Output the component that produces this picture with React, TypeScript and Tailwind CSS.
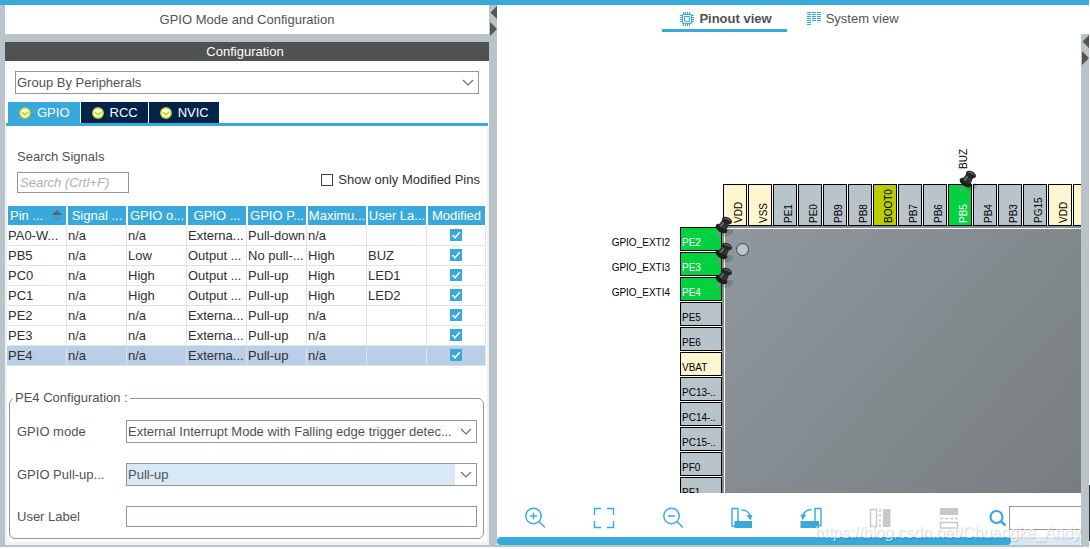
import { useState } from 'react'
import type { JSX, ReactNode } from 'react'

interface SignalRow {
  pin: string
  signal: string
  output: string
  mode: string
  pull: string
  speed: string
  label: string
}

interface Pin {
  name: string
  kind: 'io' | 'power' | 'boot' | 'used'
  signal?: string
}

const COLUMNS = ['Pin ...', 'Signal ...', 'GPIO o...', 'GPIO ...', 'GPIO P...', 'Maximu...', 'User La...', 'Modified']

const ROWS: SignalRow[] = [
  { pin: 'PA0-W...', signal: 'n/a', output: 'n/a', mode: 'Externa...', pull: 'Pull-down', speed: 'n/a', label: '' },
  { pin: 'PB5', signal: 'n/a', output: 'Low', mode: 'Output ...', pull: 'No pull-...', speed: 'High', label: 'BUZ' },
  { pin: 'PC0', signal: 'n/a', output: 'High', mode: 'Output ...', pull: 'Pull-up', speed: 'High', label: 'LED1' },
  { pin: 'PC1', signal: 'n/a', output: 'High', mode: 'Output ...', pull: 'Pull-up', speed: 'High', label: 'LED2' },
  { pin: 'PE2', signal: 'n/a', output: 'n/a', mode: 'Externa...', pull: 'Pull-up', speed: 'n/a', label: '' },
  { pin: 'PE3', signal: 'n/a', output: 'n/a', mode: 'Externa...', pull: 'Pull-up', speed: 'n/a', label: '' },
  { pin: 'PE4', signal: 'n/a', output: 'n/a', mode: 'Externa...', pull: 'Pull-up', speed: 'n/a', label: '' },
]

const TOP_PINS: Pin[] = [
  { name: 'VDD', kind: 'power' },
  { name: 'VSS', kind: 'power' },
  { name: 'PE1', kind: 'io' },
  { name: 'PE0', kind: 'io' },
  { name: 'PB9', kind: 'io' },
  { name: 'PB8', kind: 'io' },
  { name: 'BOOT0', kind: 'boot' },
  { name: 'PB7', kind: 'io' },
  { name: 'PB6', kind: 'io' },
  { name: 'PB5', kind: 'used', signal: 'BUZ' },
  { name: 'PB4', kind: 'io' },
  { name: 'PB3', kind: 'io' },
  { name: 'PG15', kind: 'io' },
  { name: 'VDD', kind: 'power' },
  { name: '', kind: 'power' },
]

const LEFT_PINS: Pin[] = [
  { name: 'PE2', kind: 'used', signal: 'GPIO_EXTI2' },
  { name: 'PE3', kind: 'used', signal: 'GPIO_EXTI3' },
  { name: 'PE4', kind: 'used', signal: 'GPIO_EXTI4' },
  { name: 'PE5', kind: 'io' },
  { name: 'PE6', kind: 'io' },
  { name: 'VBAT', kind: 'power' },
  { name: 'PC13-..', kind: 'io' },
  { name: 'PC14-..', kind: 'io' },
  { name: 'PC15-..', kind: 'io' },
  { name: 'PF0', kind: 'io' },
  { name: 'PF1', kind: 'io' },
]

const PIN_FILL = { io: '#b9c4ca', power: '#fff6cf', boot: '#bbcc01', used: '#03d13f' }

function Chevron(): JSX.Element {
  return (
    <svg width="12" height="8" viewBox="0 0 12 8" fill="none" stroke="#6b6f73" strokeWidth="1.200" aria-hidden="true">
      <path d="M1 1l5 5 5-5" />
    </svg>
  )
}

function Combo({ id, label, value, tinted = false }: { id: string; label?: string; value: string; tinted?: boolean }) {
  return (
    <div className="relative h-[23px] w-full">
      <select
        id={id}
        aria-label={label}
        className={`block h-full w-full appearance-none border border-[#8f979d] pl-px pr-6 text-[#525252] outline-none ${
          tinted ? 'bg-[#d9e8f5]' : 'bg-white'
        }`}
      >
        <option>{value}</option>
      </select>
      <span className="pointer-events-none absolute inset-y-px right-px flex w-[21px] items-center justify-center bg-white">
        <Chevron />
      </span>
    </div>
  )
}

function Arrows(): JSX.Element {
  return (
    <svg width="8" height="31" viewBox="0 0 8 31" fill="#555" aria-hidden="true">
      <path d="M8 1v13L1.500 7.500zM1 17v14l7-7z" />
    </svg>
  )
}

function TabButton({ name, active, onClick }: { name: string; active: boolean; onClick: () => void }) {
  return (
    <button
      role="tab"
      aria-selected={active}
      onClick={onClick}
      className={`flex h-[21px] items-center gap-[6px] pl-[11px] pr-2.5 text-white ${active ? 'bg-[#39a9dc]' : 'bg-[#03234b]'}`}
    >
      <svg width="12" height="12" viewBox="0 0 12 12" fill="none" aria-hidden="true">
        <circle cx="6" cy="6" r="5.300" fill="#fff" stroke="#bbcc01" strokeWidth="1.400" />
        <path d="M3 5l3 3 3.200-3.200" stroke="#bbcc01" strokeWidth="1.500" />
      </svg>
      {name}
    </button>
  )
}

function SignalTable(): JSX.Element {
  const cell = 'truncate border-b border-r border-[#e0e3e6] p-0 pl-px'
  return (
    <table className="w-full table-fixed border-separate border-spacing-0 text-[#303030]">
      <colgroup>
        {COLUMNS.map((column) => (
          <col key={column} className={column === 'Modified' ? '' : 'w-[60px]'} />
        ))}
      </colgroup>
      <thead>
        <tr className="h-5">
          {COLUMNS.map((column, i) => (
            <th
              key={column}
              className="overflow-hidden whitespace-nowrap border-x border-b border-white bg-[#39a9dc] p-0 font-normal leading-[19px] text-white"
            >
              {i === 0 ? (
                <span className="flex items-center justify-between pl-0.5 pr-1">
                  {column}
                  <svg width="10" height="12" viewBox="0 0 10 12" aria-hidden="true">
                    <path d="M5 0l5 5H0z" fill="#5c6468" />
                    <path d="M5 11L0.500 7h9z" fill="#4f93b5" />
                  </svg>
                </span>
              ) : (
                column
              )}
            </th>
          ))}
        </tr>
      </thead>
      <tbody>
        {ROWS.map((row) => (
          <tr key={row.pin} className={`h-5 leading-[19px] ${row.pin === 'PE4' ? 'bg-[#b9cfe7]' : 'bg-white'}`}>
            <td className={cell}>{row.pin}</td>
            <td className={cell}>{row.signal}</td>
            <td className={cell}>{row.output}</td>
            <td className={cell}>{row.mode}</td>
            <td className={cell}>{row.pull}</td>
            <td className={cell}>{row.speed}</td>
            <td className={cell}>{row.label}</td>
            <td className="border-b border-r border-[#e0e3e6] p-0">
              <span className="grid h-[19px] place-items-center pb-px">
                <input
                  type="checkbox"
                  defaultChecked
                  aria-label={`${row.pin} modified`}
                  className="col-start-1 row-start-1 size-3 appearance-none bg-[#39a9dc]"
                />
                <svg
                  width="12"
                  height="12"
                  viewBox="0 0 12 12"
                  fill="none"
                  stroke="#fff"
                  strokeWidth="1.600"
                  className="pointer-events-none col-start-1 row-start-1"
                  aria-hidden="true"
                >
                  <path d="M2.500 6l2.500 2.700L9.700 3.300" />
                </svg>
              </span>
            </td>
          </tr>
        ))}
      </tbody>
    </table>
  )
}

function ConfigPanel(): JSX.Element {
  const [tab, setTab] = useState('GPIO')

  return (
    <section className="flex w-[489px] shrink-0 flex-col bg-[#b9c4ca] pb-0.5 pl-[5px] text-[#525252]">
      <h1 className="h-[29px] bg-white text-center leading-[29px]">GPIO Mode and Configuration</h1>
      <h2 className="mt-2 h-[19px] bg-[#505251] pr-1 text-center leading-[19px] text-white">Configuration</h2>

      <div className="flex grow flex-col bg-white">
        <div className="px-2.5 pt-2.5">
          <Combo id="group" label="Grouping" value="Group By Peripherals" />
        </div>

        <div role="tablist" className="mx-px mt-2 flex gap-px border-b-[3px] border-[#39a9dc] pl-0.5">
          {['GPIO', 'RCC', 'NVIC'].map((name) => (
            <TabButton key={name} name={name} active={tab === name} onClick={() => setTab(name)} />
          ))}
        </div>

        <div className="grow border-x-2 border-b-[3px] border-[#eff1f3] pr-px">
          <div className="flex items-end justify-between pl-2.5 pr-[6px] pt-[22px]">
            <div className="flex flex-col gap-[6px]">
              <label htmlFor="search" className="leading-[18px]">
                Search Signals
              </label>
              <input
                id="search"
                placeholder="Search (Crtl+F)"
                className="h-[21px] w-[112px] border border-[#8f979d] px-0.5 italic outline-none placeholder:text-[#b0b0b0]"
              />
            </div>
            <label className="mb-1 flex items-center gap-[5px] leading-[18px] text-[#303030]">
              <input type="checkbox" className="size-3 appearance-none border border-[#444]" />
              Show only Modified Pins
            </label>
          </div>

          <div className="mt-[13px]">
            <SignalTable />
          </div>

          <fieldset className="ml-0.5 mr-0.5 mt-[23px] rounded-[6px] border border-[#8f979d] pb-[11px] pl-[7px] pr-[6px] pt-[13px]">
            <legend className="-ml-1 px-0.5 leading-[18px]">PE4 Configuration :</legend>
            <div className="grid grid-cols-[109px_1fr] items-center gap-y-5">
              <label htmlFor="mode">GPIO mode</label>
              <Combo id="mode" value="External Interrupt Mode with Falling edge trigger detec..." />
              <label htmlFor="pull">GPIO Pull-up...</label>
              <Combo id="pull" value="Pull-up" tinted />
              <label htmlFor="user-label">User Label</label>
              <input id="user-label" className="h-[21px] w-full border border-[#8f979d] px-0.5 outline-none" />
            </div>
          </fieldset>
        </div>
      </div>
    </section>
  )
}

// x, y is the tip of the needle
function PushPin({ x, y }: { x: number; y: number }): JSX.Element {
  return (
    <g transform={`translate(${x} ${y})`}>
      <path d="M6-3q4-5 9-5 4 2 1 5-5 3-8 3z" fill="#000" opacity="0.15" />
      <path d="M0.500 0.500L5-7" stroke="#8b8b8b" strokeWidth="1.800" />
      <ellipse cx="5.500" cy="-8.500" rx="6.500" ry="3.800" transform="rotate(32 5.500 -8.500)" fill="#1d1d1d" />
      <path d="M2-11l4.500-6.500 7 3.500-3 7z" fill="#333" />
      <ellipse cx="11" cy="-16.500" rx="5.300" ry="3.300" transform="rotate(24 11 -16.500)" fill="#262626" />
      <path d="M4.500-10.500L7.500-14.500" stroke="#8a8a8a" strokeWidth="1.200" />
      <path d="M8.500-18.500q4 0 6 2.500" stroke="#777" fill="none" />
    </g>
  )
}

function ChipDrawing(): JSX.Element {
  return (
    <svg className="block h-[459px] w-full grow overflow-hidden text-[10px]" role="img" aria-label="Chip pinout">
      <defs>
        <linearGradient id="package" gradientUnits="userSpaceOnUse" x1="228" y1="195" x2="560" y2="500">
          <stop offset="0" stopColor="#8f989e" />
          <stop offset="1" stopColor="#777d7f" />
        </linearGradient>
      </defs>

      <rect x="225" y="191" width="100%" height="100%" fill="#84908f" />
      <rect x="227" y="194" width="100%" height="100%" fill="#fff" />
      <rect x="228" y="195" width="100%" height="100%" fill="url(#package)" />
      <circle cx="245.500" cy="215.500" r="6" fill="#b9c4ca" stroke="#3f4446" />

      {TOP_PINS.map((pin, i) => (
        <g key={i}>
          <rect x={226.5 + i * 25} y="150.500" width="23" height="41" fill={PIN_FILL[pin.kind]} stroke="#000" />
          <text transform={`translate(${245 + i * 25} 189) rotate(-90)`} fill={pin.kind === 'used' ? '#fff' : '#000'}>
            {pin.name}
          </text>
          {pin.signal && (
            <text transform={`translate(${245 + i * 25} 135) rotate(-90)`}>{pin.signal}</text>
          )}
        </g>
      ))}

      {LEFT_PINS.map((pin, i) => (
        <g key={pin.name}>
          <rect x="183.500" y={193.5 + i * 25} width="41" height="23" fill={PIN_FILL[pin.kind]} stroke="#000" />
          <text x="185" y={212 + i * 25} fill={pin.kind === 'used' ? '#fff' : '#000'}>
            {pin.name}
          </text>
          {pin.signal && (
            <text x="173" y={212 + i * 25} textAnchor="end">
              {pin.signal}
            </text>
          )}
        </g>
      ))}

      <PushPin x={463} y={157} />
      {[203, 229, 254].map((y) => (
        <PushPin key={y} x={219} y={y} />
      ))}
    </svg>
  )
}

function Tool({ label, children }: { label: string; children: ReactNode }) {
  return (
    <button aria-label={label} className="flex w-[69px] shrink-0 justify-center">
      <svg width="22" height="22" viewBox="0 0 22 22" fill="none" stroke="#39a9dc" strokeWidth="1.400" aria-hidden="true">
        {children}
      </svg>
    </button>
  )
}

function Toolbar(): JSX.Element {
  return (
    <div className="flex h-11 items-center overflow-hidden pl-[3px] pt-[5px]">
      <Tool label="Zoom in">
        <circle cx="9.500" cy="9" r="7.700" />
        <path d="M15 14.500l6 6M6 9h7M9.500 5.500v7" />
      </Tool>
      <Tool label="Best fit">
        <path d="M1.500 8V1.500H8M14 1.500h6.500V8M20.500 14v6.500H14M8 20.500H1.500V14" />
      </Tool>
      <Tool label="Zoom out">
        <circle cx="9.500" cy="9" r="7.700" />
        <path d="M15 14.500l6 6M6 9h7" />
      </Tool>
      <Tool label="Rotate right">
        <path d="M7 14V1.500H1v17.500h3" />
        <path d="M3.500 14H21v7H3.500z" fill="#39a9dc" stroke="none" />
        <path d="M10.500 3q7 0 8.500 6" />
        <path d="M15.500 8H21.500l-2 5.500z" fill="#39a9dc" stroke="none" />
      </Tool>
      <Tool label="Rotate left">
        <path d="M15 14V1.500h6v17h-3" />
        <path d="M0.500 14H19v7H0.500z" fill="#39a9dc" stroke="none" />
        <path d="M11.500 2.500Q4 3 3 9" />
        <path d="M0.500 7.500H6.500l-4 5.500z" fill="#39a9dc" stroke="none" />
      </Tool>
      <Tool label="Flip horizontally">
        <g stroke="#c8c8c8">
          <path d="M1.500 2.500h6v17h-6z" />
          <path d="M11 2v18" strokeDasharray="3 2" />
          <path d="M14 2h7.500v18H14z" fill="#c8c8c8" stroke="none" />
        </g>
      </Tool>
      <Tool label="Flip vertically">
        <g stroke="#c8c8c8">
          <path d="M2 1h18v7H2z" fill="#c8c8c8" stroke="none" />
          <path d="M2 11.500h18" strokeDasharray="3 2" />
          <path d="M2.500 21v-5.500h17V21z" />
        </g>
      </Tool>
      <label className="flex min-w-0 grow items-center gap-0.5 pl-[6px]">
        <svg width="18" height="18" viewBox="0 0 18 18" fill="none" stroke="#39a9dc" strokeWidth="2.200" aria-hidden="true">
          <circle cx="7.500" cy="8" r="6" />
          <path d="M12 12.500l4.500 4" strokeWidth="2.600" />
        </svg>
        <input aria-label="Find pin" className="h-6 w-0 min-w-0 grow border border-r-0 border-[#8f979d] px-1 outline-none" />
      </label>
    </div>
  )
}

function ViewTabs(): JSX.Element {
  return (
    <div role="tablist" className="flex h-[29px] justify-center bg-white pr-[26px] text-[#525252]">
      <button
        role="tab"
        aria-selected="true"
        className="flex h-[27px] items-center gap-[5px] border-b-[3px] border-[#39a9dc] pl-[18px] pr-[15px] pt-1 font-bold"
      >
        <svg width="14" height="14" viewBox="0 0 14 14" fill="none" stroke="#39a9dc" aria-hidden="true">
          <path d="M2.500 2.500h9v9h-9zM4.500 4.500h5v5h-5z" />
          <path d="M3.500 0v2M5.500 0v2M7.500 0v2M9.500 0v2M3.500 12v2M5.500 12v2M7.500 12v2M9.500 12v2M0 3.500h2M0 5.500h2M0 7.500h2M0 9.500h2M12 3.500h2M12 5.500h2M12 7.500h2M12 9.500h2" />
        </svg>
        Pinout view
      </button>
      <button role="tab" aria-selected="false" className="ml-5 flex h-[27px] items-center gap-[5px] pt-px">
        <svg width="14" height="14" viewBox="0 0 14 14" fill="none" stroke="#39a9dc" aria-hidden="true">
          <path d="M2 0v14" strokeWidth="4" strokeDasharray="1 1" />
          <path d="M7 0v9M12 0v9" strokeWidth="4" strokeDasharray="1 1" />
        </svg>
        System view
      </button>
    </div>
  )
}

export default function App(): JSX.Element {
  return (
    <div className="flex min-h-screen flex-col bg-white pb-0.5 font-['Liberation_Sans',Arial,sans-serif] text-[13px]">
      <div className="mr-px h-[5px] bg-[#39a9dc]" />
      <div className="flex grow">
        <ConfigPanel />
        <div className="w-2 shrink-0 bg-[#b9c4ca]">
          <Arrows />
        </div>
        <main className="flex min-w-0 grow flex-col">
          <ViewTabs />
          <div className="flex grow">
            <div className="relative flex min-w-0 grow flex-col">
              <ChipDrawing />
              <Toolbar />
              <div className="h-2 rounded-full bg-[#d9e8f5]">
                <div className="h-full w-[88%] rounded-full bg-[#39a9dc]" />
              </div>
              <div className="h-0.5 bg-[#b9c4ca]" />
              <p className="pointer-events-none absolute bottom-0.5 right-0 text-base text-white/70 [text-shadow:1px_1px_1px_rgb(0_0_0/0.18)]">
                https://blog.csdn.net/Chuangke_Andy
              </p>
            </div>
            <div className="w-2 shrink-0 bg-[#b9c4ca]">
              <Arrows />
            </div>
            <div className="flex w-px shrink-0 flex-col justify-end pb-[6px]">
              <div className="h-14 bg-[#2b2f38]" />
            </div>
          </div>
        </main>
      </div>
    </div>
  )
}
